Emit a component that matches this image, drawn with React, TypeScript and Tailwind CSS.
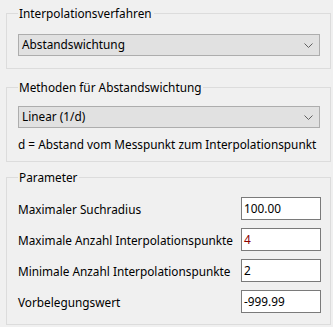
import React from 'react';

const font = { fontFamily: '"Noto Sans", "Segoe UI", sans-serif' };

const Chevron = () => (
  <svg width="9" height="5" viewBox="0 0 9 5" className="shrink-0">
    <path d="M0.5 0.5 L4.5 4.5 L8.5 0.5" fill="none" stroke="#606060" strokeWidth="1" />
  </svg>
);

const Combo = ({ value }: { value: string }) => (
  <div className="flex h-[22px] w-[302px] items-center justify-between border border-[#adadad] bg-[#e1e1e1] pl-[3px] pr-[6px]">
    <span className="leading-none">{value}</span>
    <Chevron />
  </div>
);

const Group = ({ title, className, children }: { title: string; className: string; children: React.ReactNode }) => (
  <fieldset className={`border border-[#dcdcdc] ${className}`}>
    <legend className="h-4 pl-px pr-[2px] leading-4">{title}</legend>
    {children}
  </fieldset>
);

const params = [
  { label: 'Maximaler Suchradius', value: '100.00', color: 'text-black' },
  { label: 'Maximale Anzahl Interpolationspunkte', value: '4', color: 'text-[#8b0000]' },
  { label: 'Minimale Anzahl Interpolationspunkte', value: '2', color: 'text-black' },
  { label: 'Vorbelegungswert', value: '-999.99', color: 'text-black' },
];

export default function App() {
  return (
    <div className="h-[327px] w-[333px] bg-[#f0f0f0] pl-[6px] pr-[2px] pt-[5px] text-[11.8px] text-black" style={font}>
      <Group title="Interpolationsverfahren" className="pb-[12px] pl-[11px]">
        <div className="mt-[13px]">
          <Combo value="Abstandswichtung" />
        </div>
      </Group>

      <Group title="Methoden für Abstandswichtung" className="mt-[10px] pb-[9px] pl-[11px]">
        <div className="mt-[11px]">
          <Combo value="Linear (1/d)" />
        </div>
        <p className="mt-2 leading-4">d = Abstand vom Messpunkt zum Interpolationspunkt</p>
      </Group>

      <Group title="Parameter" className="mt-[7px] pb-[11px] pl-[11px]">
        <div className="mt-[12px] flex w-[303px] flex-col gap-2">
          {params.map((p) => (
            <div key={p.label} className="flex items-center justify-between">
              <span className="leading-4">{p.label}</span>
              <div className={`flex h-[23px] w-[80px] items-center border border-[#7a7a7a] bg-white pl-[2px] ${p.color}`}>
                {p.value}
              </div>
            </div>
          ))}
        </div>
      </Group>
    </div>
  );
}
